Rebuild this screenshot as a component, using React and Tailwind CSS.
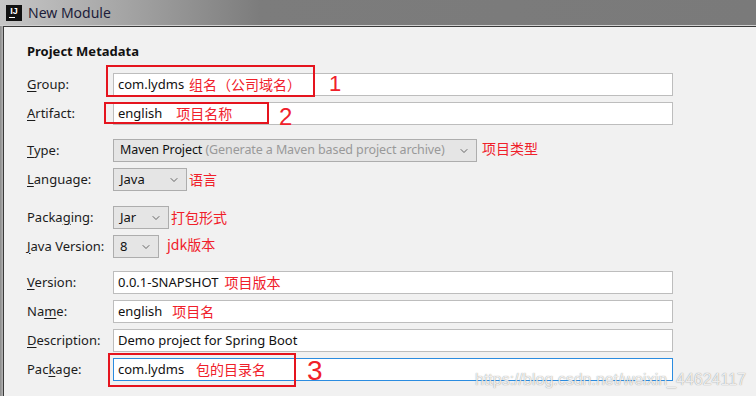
import { ChevronDown } from "lucide-react";

const ui = "font-['Segoe_UI','Noto_Sans','Noto_Sans_CJK_SC',sans-serif]";
const cjk = "font-['Noto_Sans_CJK_SC','Microsoft_YaHei',sans-serif]";

// label with an underlined mnemonic letter
function Label({ text, u }) {
  const i = text.indexOf(u);
  return (
    <span className="w-[86px] shrink-0 text-[13px] text-[#1c1c1c]">
      {text.slice(0, i)}
      <span className="underline underline-offset-2">{u}</span>
      {text.slice(i + 1)}
    </span>
  );
}

function Note({ children, className = "" }) {
  return <span className={`${cjk} -mt-[2px] text-[14px] leading-none text-[#f0202a] ${className}`}>{children}</span>;
}

function Input({ value, note, gap = "ml-[5px]", focused }) {
  return (
    <div
      className={`flex h-[23px] w-[560px] items-center border bg-white pl-[4px] text-[13px] text-[#111] ${
        focused ? "border-[#2b8ce0]" : "border-[#bdbdbd]"
      }`}
    >
      <span>{value}</span>
      {note && <Note className={gap}>{note}</Note>}
    </div>
  );
}

function Combo({ w, children, text = "text-[13px]" }) {
  return (
    <div
      className={`flex h-[23px] ${w} items-center justify-between border border-[#adadad] bg-[#e5e5e5] pl-[6px] pr-[6px] ${text} text-[#111]`}
    >
      <span className="whitespace-nowrap">{children}</span>
      <ChevronDown size={12} strokeWidth={1.6} className="shrink-0 text-[#444]" />
    </div>
  );
}

function Row({ label, u, mt = "mt-[6px]", children }) {
  return (
    <div className={`relative flex h-[23px] items-center ${mt}`}>
      <Label text={label} u={u} />
      {children}
    </div>
  );
}

function RedBox({ className }) {
  return <div className={`pointer-events-none absolute border-2 border-[#e5141e] ${className}`} />;
}

function Num({ children, className }) {
  return (
    <span
      className={`absolute font-['Liberation_Sans',sans-serif] font-light leading-none text-[#f0202a] ${className}`}
    >
      {children}
    </span>
  );
}

export default function App() {
  return (
    <div className={`relative flex h-[396px] w-[756px] flex-col overflow-hidden bg-[#f1f1f1] ${ui}`}>
      {/* title bar */}
      <div className="flex h-[26px] shrink-0 items-center gap-[6px] border-b border-[#d0d0d0] bg-[linear-gradient(90deg,#c6c6c6_0px,#a6a6a6_120px,#7c7c7c_260px,#7a7a7a_100%)] pl-[6px]">
        <div className="flex h-[16px] w-[16px] flex-col items-center justify-center bg-[#111]">
          <span className="font-['Liberation_Sans',sans-serif] text-[9px] font-bold leading-none text-white">IJ</span>
          <span className="mt-[1px] h-[1px] w-[6px] self-start ml-[3px] bg-white" />
        </div>
        <span className="text-[14px] text-[#1d1d3a]">New Module</span>
      </div>

      <div className="flex flex-1">
        <div className="w-[3px] bg-[linear-gradient(90deg,#8a8a8a,#b4b4b4)]" />
        <div className="flex flex-1 flex-col border-l border-t border-[#3a3a3a] pl-[23px]">
          <div className="mt-[16px] h-[16px] text-[13px] font-bold leading-[16px] text-[#111]">Project Metadata</div>

          <Row label="Group:" u="G" mt="mt-[14px]">
            <Input value="com.lydms" note="组名（公司域名）" />
            <RedBox className="left-[79px] top-[-8px] h-[32px] w-[209px]" />
            <Num className="left-[302px] top-[0px] text-[22px]">1</Num>
          </Row>
          <Row label="Artifact:" u="A">
            <Input value="english" note="项目名称" gap="ml-[14px]" />
            <RedBox className="left-[77px] top-[0px] h-[22px] w-[165px]" />
            <Num className="left-[252px] top-[3px] text-[24px]">2</Num>
          </Row>

          <Row label="Type:" u="T" mt="mt-[14px]">
            <Combo w="w-[364px]" text="text-[12.5px] tracking-[-0.1px]">
              Maven Project <span className="text-[#999]">(Generate a Maven based project archive)</span>
            </Combo>
            <Note className="ml-[5px] -mt-[6px]">项目类型</Note>
          </Row>
          <Row label="Language:" u="L">
            <Combo w="w-[74px]">Java</Combo>
            <Note className="ml-[2px]">语言</Note>
          </Row>

          <Row label="Packaging:" u="g" mt="mt-[15px]">
            <Combo w="w-[56px]">Jar</Combo>
            <Note className="ml-[2px]">打包形式</Note>
          </Row>
          <Row label="Java Version:" u="J">
            <Combo w="w-[46px]">8</Combo>
            <Note className="ml-[8px] -mt-[5px]">jdk版本</Note>
          </Row>

          <Row label="Version:" u="V" mt="mt-[13px]">
            <Input value="0.0.1-SNAPSHOT" note="项目版本" gap="ml-[6px]" />
          </Row>
          <Row label="Name:" u="m">
            <Input value="english" note="项目名" gap="ml-[10px]" />
          </Row>
          <Row label="Description:" u="D">
            <Input value="Demo project for Spring Boot" />
          </Row>
          <Row label="Package:" u="k">
            <Input value="com.lydms" note="包的目录名" gap="ml-[12px]" focused />
            <RedBox className="left-[81px] top-[-5px] h-[34px] w-[188px]" />
            <Num className="left-[280px] top-[-1px] text-[28px]">3</Num>
          </Row>
        </div>
      </div>

      {/* csdn watermark */}
      <span className="pointer-events-none absolute left-[475px] top-[368px] font-['Liberation_Sans',sans-serif] text-[16px] text-white/85 [text-shadow:0_0_1px_rgba(0,0,0,0.5)]">
        https://blog.csdn.net/weixin_44624117
      </span>
    </div>
  );
}
